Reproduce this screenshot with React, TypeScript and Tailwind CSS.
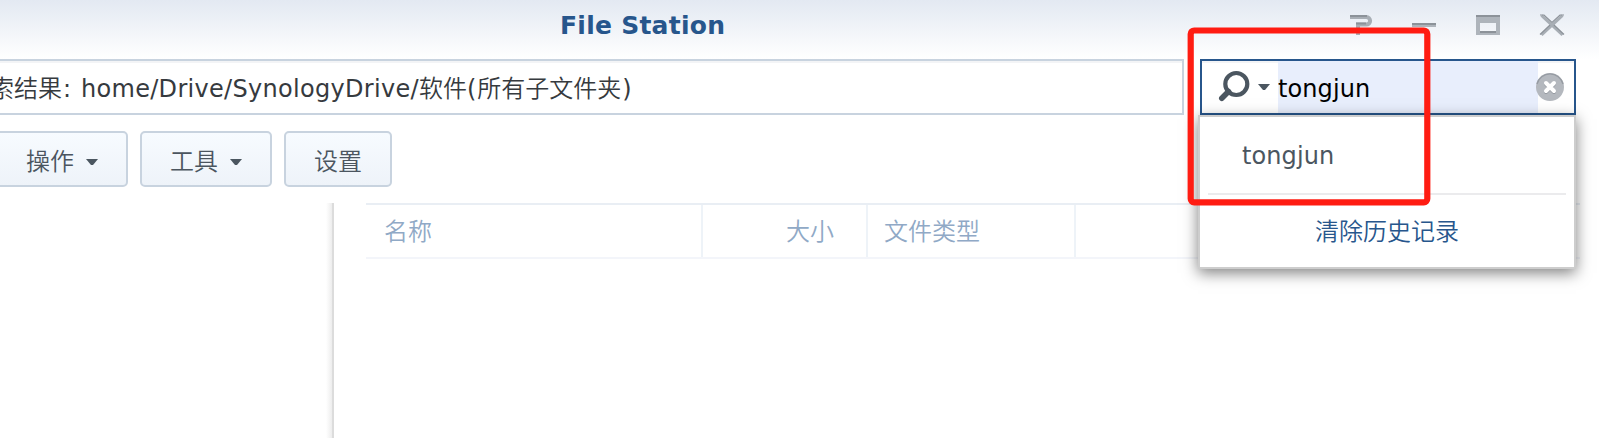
import React from "react";

const latin = "font-['DejaVu_Sans','Noto_Sans_CJK_SC',sans-serif]";

function Caret() {
  return (
    <svg width="12" height="7" viewBox="0 0 12 7" className="shrink-0">
      <path d="M0 0H12L7 6H5Z" fill="#4b5660" />
    </svg>
  );
}

function ToolButton({ label, menu, className }: { label: string; menu?: boolean; className: string }) {
  return (
    <button
      className={
        "flex h-14 items-center rounded-[5px] border-2 border-[#c8d3df] bg-linear-to-b from-[#f7fbff] to-[#eef3f9] text-2xl leading-6 font-[350] text-[#4b555f] " +
        className
      }
    >
      <span className="mt-[5px]">{label}</span>
      {menu && (
        <span className="mt-1.5 ml-3">
          <Caret />
        </span>
      )}
    </button>
  );
}

function WindowControls() {
  return (
    <svg width="220" height="40" viewBox="1345 0 220 40" fill="none">
      <path d="M1350 17H1366.3A3.8 3.8 0 0 1 1366.3 24.6H1358V35" stroke="#a8aeb5" strokeWidth="4" />
      <path d="M1350 16H1367M1356 23.6H1366" stroke="#8c9299" strokeWidth="2" />
      <path d="M1412 25H1436" stroke="#aeb4bb" strokeWidth="4" />
      <path d="M1412 24H1436" stroke="#8c9299" strokeWidth="2" />
      <path d="M1476 15H1500V35H1476ZM1480 23V33H1496V23Z" fill="#aeb4bb" fillRule="evenodd" />
      <path d="M1476 16H1500M1480 32H1496" stroke="#8c9299" strokeWidth="2" />
      <path d="M1541.5 15.5L1562.5 35M1562.5 15.5L1541.5 35" stroke="#a8aeb5" strokeWidth="3" />
      <path d="M1540 15H1544L1552 22.5L1560 15H1564M1540 34.5L1550 25M1564 34.5L1554 25" stroke="#8c9299" strokeWidth="1.2" />
    </svg>
  );
}

function SearchBox() {
  return (
    <div className="relative flex h-14 w-[376px] border-2 border-[#27568c] bg-white shadow-[inset_0_2px_0_#f3f4f6]">
      <div className="flex w-[76px] items-center pl-[15px]">
        <svg width="34" height="36" viewBox="0 0 34 36" fill="none">
          <circle cx="19.3" cy="15" r="11" stroke="#4b5660" strokeWidth="4.2" />
          <path d="M11.5 22.5L4.8 29.2" stroke="#4b5660" strokeWidth="5.6" strokeLinecap="round" />
        </svg>
        <span className="ml-[7px]">
          <Caret />
        </span>
      </div>
      <div className="flex flex-1 items-center bg-[#e8eefc] text-2xl leading-7 tracking-[0.1px] text-black">
        <span className="mt-1">tongjun</span>
      </div>
      <div className="w-9" />
      <svg width="28" height="28" viewBox="0 0 28 28" fill="none" className="absolute top-3 right-2.5">
        <circle cx="14" cy="14" r="14" fill="#b4b8be" />
        <path d="M1 11A13.4 13.4 0 0 1 27 11" stroke="#969ba2" strokeWidth="1.3" />
        <path d="M10 18L18 10M10 10L18 18" transform="translate(0 1)" stroke="#969ba2" strokeWidth="4" strokeLinecap="round" />
        <path d="M10 18L18 10M10 10L18 18" stroke="#fff" strokeWidth="4" strokeLinecap="round" />
      </svg>
      <div className="absolute top-[54px] -left-1 z-10 h-[154px] w-[378px] border-2 border-[#cdcdcd] bg-white shadow-[0_4px_14px_rgba(0,0,0,0.5)]">
        <div className="flex h-[76px] items-center pt-0.5 pl-[42px] text-2xl tracking-[0.1px] text-[#4b5660]">tongjun</div>
        <div className="mx-2 h-0.5 bg-[#ebebed]" />
        <div className="flex h-[72px] items-center justify-center pt-0.5 text-2xl font-[350] text-[#27568c]">清除历史记录</div>
      </div>
    </div>
  );
}

export default function App() {
  return (
    <div className={"relative flex h-[438px] w-[1599px] flex-col overflow-hidden bg-white " + latin}>
      <header className="flex h-[59px] shrink-0 items-start justify-between bg-linear-to-b from-[#e3e9f2] to-white">
        <h1 className="ml-[560px] pt-[11px] text-[25px] leading-[30px] font-bold tracking-[0.25px] text-[#27568c]">File Station</h1>
        <div className="mr-[34px]">
          <WindowControls />
        </div>
      </header>
      <div className="flex h-14 shrink-0 gap-4">
        <div className="flex w-[1184px] items-center border-2 border-l-0 border-[#c8d3df] pt-[3px] text-2xl leading-7 whitespace-pre text-[#363a3e] shadow-[inset_0_2px_0_#f3f4f6]">
          <span className="-ml-[10px] font-[350]">索结果</span>
          <span className="w-[19px] pl-px">:</span>
          <span className="tracking-[0.3px]">home/Drive/SynologyDrive/</span>
          <span className="font-[350]">软件</span>
          <span className="pr-px">(</span>
          <span className="font-[350]">所有子文件夹</span>
          <span className="pl-px">)</span>
        </div>
        <SearchBox />
      </div>
      <div className="mt-4 flex h-14 shrink-0 gap-3">
        <ToolButton label="操作" menu className="-ml-1 w-[132px] pl-7" />
        <ToolButton label="工具" menu className="w-[132px] pl-7" />
        <ToolButton label="设置" className="w-[108px] justify-center" />
      </div>
      <main className="mt-4 flex flex-1">
        <aside className="flex w-[334px] justify-end border-r-2 border-[#dcdcdc]">
          <div className="w-1.5 bg-linear-to-r from-white to-[#ededed]" />
        </aside>
        <div className="ml-8 flex h-14 w-[1214px] border-t-2 border-b-2 border-t-[#e9eef4] border-b-[#f3f5fa] text-2xl font-[350] text-[#90a9c6]">
          <div className="flex w-[337px] items-center border-r-2 border-[#eef3f8] pt-0.5 pl-[18px]">名称</div>
          <div className="flex w-[165px] items-center justify-end border-r-2 border-[#eef3f8] pt-0.5 pr-8">大小</div>
          <div className="flex w-[208px] items-center border-r-2 border-[#eef3f8] pt-0.5 pl-4">文件类型</div>
        </div>
      </main>
      <svg width="250" height="186" viewBox="1184 24 250 186" fill="none" className="pointer-events-none absolute top-6 left-[1184px] z-20">
        <rect x="1190.7" y="30.5" width="236.6" height="171.8" rx="3.5" stroke="#ff1c12" strokeWidth="6.2" />
      </svg>
    </div>
  );
}
